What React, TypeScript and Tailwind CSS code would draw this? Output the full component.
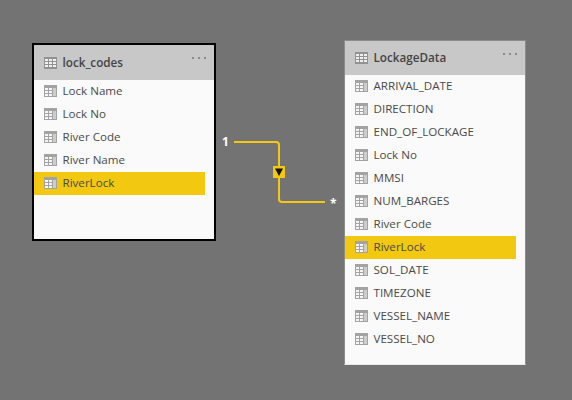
const lockCodes = ["Lock Name", "Lock No", "River Code", "River Name", "RiverLock"];
const lockageData = [
  "ARRIVAL_DATE",
  "DIRECTION",
  "END_OF_LOCKAGE",
  "Lock No",
  "MMSI",
  "NUM_BARGES",
  "River Code",
  "RiverLock",
  "SOL_DATE",
  "TIMEZONE",
  "VESSEL_NAME",
  "VESSEL_NO",
];

function HeaderIcon() {
  return (
    <svg width="13" height="12" viewBox="0 0 13 12" className="shrink-0">
      <rect width="13" height="12" fill="#929292" />
      {[1, 5, 9].map((x) =>
        [2, 5, 8].map((y) => <rect key={`${x}-${y}`} x={x} y={y} width="3" height="2" fill="#f0f0f0" />),
      )}
    </svg>
  );
}

function FieldIcon() {
  return (
    <svg width="13" height="12" viewBox="0 0 13 12" className="shrink-0">
      <rect width="13" height="12" fill="#a3a3a3" />
      <rect x="9" y="3" width="3" height="8" fill="#cdcdcd" />
      {[1, 5].map((x) =>
        [3, 6, 9].map((y) => <rect key={`${x}-${y}`} x={x} y={y} width="3" height="2" fill="#f6f6f6" />),
      )}
    </svg>
  );
}

function Row({ name, active }: { name: string; active: boolean }) {
  return (
    <div className={`flex h-[23px] items-center gap-[5.5px] pl-[10px] pb-[2px] mr-[9px] text-[11.6px] text-[#4a4a4a] ${active ? "bg-[#f2c811]" : ""}`}>
      <FieldIcon />
      <span>{name}</span>
    </div>
  );
}

function TableCard({
  title,
  fields,
  active,
  className,
  headerClass,
}: {
  title: string;
  fields: string[];
  active: string;
  className: string;
  headerClass: string;
}) {
  return (
    <div className={`absolute flex flex-col bg-[#fafafa] ${className}`}>
      <div className={`relative flex items-center gap-[5.5px] bg-[#c8c8c8] pl-[10px] ${headerClass}`}>
        <HeaderIcon />
        <span className="text-[11.7px] font-semibold text-[#444444]">{title}</span>
        <div className="absolute right-[8px] top-[12px] flex gap-[4px]">
          <span className="h-[2px] w-[2px] bg-[#8a8a8a]" />
          <span className="h-[2px] w-[2px] bg-[#8a8a8a]" />
          <span className="h-[2px] w-[2px] bg-[#8a8a8a]" />
        </div>
      </div>
      <div>
        {fields.map((f) => (
          <Row key={f} name={f} active={f === active} />
        ))}
      </div>
    </div>
  );
}

export default function App() {
  return (
    <div className="relative h-[400px] w-[572px] overflow-hidden bg-[#737373] font-['Open_Sans',sans-serif]">
      <TableCard
        title="lock_codes"
        fields={lockCodes}
        active="RiverLock"
        className="left-[32px] top-[43px] h-[198px] w-[184px] border-2 border-black"
        headerClass="h-[35px]"
      />
      <TableCard
        title="LockageData"
        fields={lockageData}
        active="RiverLock"
        className="left-[344px] top-[40px] h-[325px] w-[182px] border border-[#8c8c8c] border-b-[#e8e8e8]"
        headerClass="h-[34px]"
      />

      {/* relationship line */}
      <svg width="572" height="400" className="absolute left-0 top-0">
        <path d="M234 142 H276 Q279 142 279 145 V199 Q279 202 282 202 H325" fill="none" stroke="#f2c811" strokeWidth="2" />
        <rect x="273" y="166" width="12" height="12" fill="#f2c811" />
        <path d="M275 168.5 H283 L279 176 Z" fill="#111111" />
      </svg>
      <span className="absolute left-[222px] top-[133px] text-[12px] font-bold text-white">1</span>
      <span className="absolute left-[330px] top-[195px] text-[12px] font-bold text-white">*</span>
    </div>
  );
}
